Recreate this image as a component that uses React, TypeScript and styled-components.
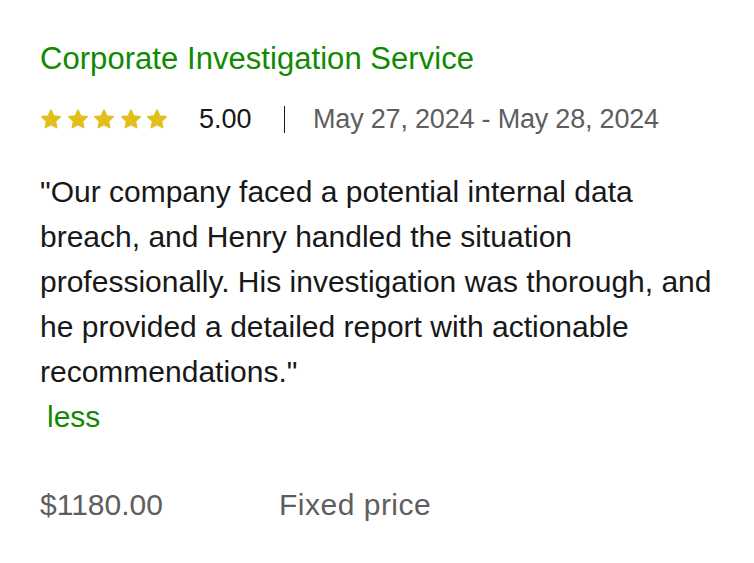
import React from "react";
import styled, { createGlobalStyle } from "styled-components";

const Global = createGlobalStyle`
  html, body { margin: 0; padding: 0; background: #ffffff; }
  body { font-family: "Liberation Sans", Arial, sans-serif; }
`;

const Card = styled.div`
  padding: 40px 40px 0 40px;
  width: 674px;
  display: flex;
  flex-direction: column;
`;

const Title = styled.h4`
  margin: 0;
  font-size: 31px;
  font-weight: 400;
  line-height: 38px;
  color: #108a00;
  letter-spacing: 0.05px;
`;

const MetaRow = styled.div`
  display: flex;
  align-items: center;
  margin-top: 22px;
  height: 38px;
`;

const Stars = styled.div`
  display: flex;
  gap: 4.5px;
`;

const Rating = styled.span`
  margin-left: 31px;
  font-size: 27px;
  color: #181818;
`;

const Divider = styled.span`
  width: 1.5px;
  height: 27px;
  background: #181818;
  margin: 0 28px 0 32px;
`;

const DateText = styled.span`
  font-size: 27px;
  color: #5e5e5e;
  letter-spacing: -0.2px;
`;

const Body = styled.p`
  margin: 31px 0 0 0;
  font-size: 30px;
  line-height: 45px;
  color: #181818;
`;

const LessLink = styled.span`
  display: block;
  margin-left: 7px;
  color: #108a00;
`;

const PriceRow = styled.div`
  display: flex;
  margin-top: 46px;
  font-size: 30px;
  line-height: 40px;
  color: #5e5e5e;
`;

const Price = styled.span`
  width: 239px;
`;

const PriceType = styled.span`
  letter-spacing: 0.5px;
`;

const Star = () => (
  <svg width="22" height="20" viewBox="0 0 24 22">
    <path
      d="M12 1.2l3.1 6.5 7.1.9-5.2 4.9 1.3 7.1L12 17.2l-6.3 3.4 1.3-7.1L1.8 8.6l7.1-.9z"
      fill="#e2bf1c"
      stroke="#e2bf1c"
      strokeWidth="1.6"
      strokeLinejoin="round"
    />
  </svg>
);

export default function App() {
  return (
    <>
      <Global />
      <Card>
        <Title>Corporate Investigation Service</Title>
        <MetaRow>
          <Stars>
            {[0, 1, 2, 3, 4].map((i) => (
              <Star key={i} />
            ))}
          </Stars>
          <Rating>5.00</Rating>
          <Divider />
          <DateText>May 27, 2024 - May 28, 2024</DateText>
        </MetaRow>
        <Body>
          "Our company faced a potential internal data breach, and Henry handled the situation
          professionally. His investigation was thorough, and he provided a detailed report with
          actionable recommendations."
          <LessLink>less</LessLink>
        </Body>
        <PriceRow>
          <Price>$1180.00</Price>
          <PriceType>Fixed price</PriceType>
        </PriceRow>
      </Card>
    </>
  );
}
